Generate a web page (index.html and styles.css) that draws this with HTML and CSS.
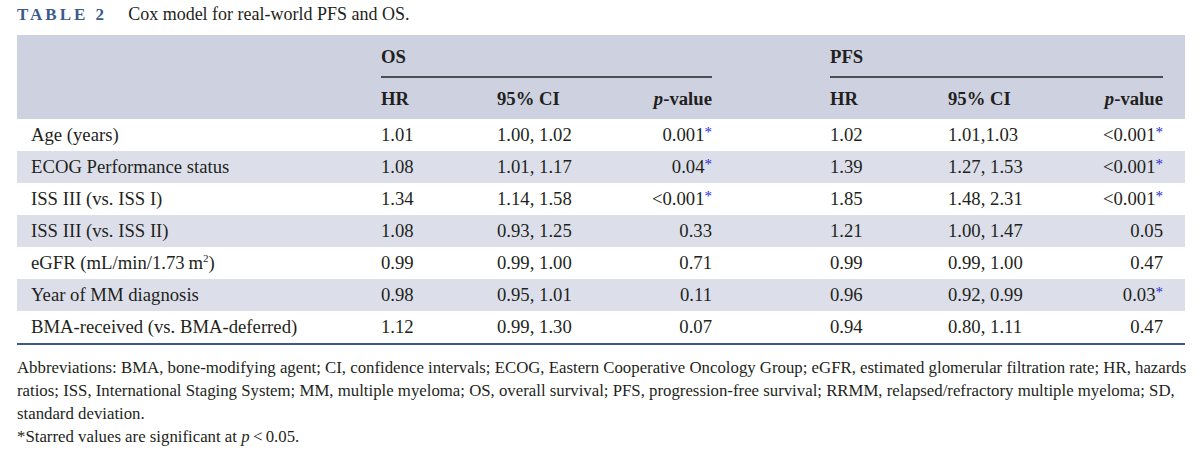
FILE: index.html
```html
<!DOCTYPE html>
<html>
<head>
<meta charset="utf-8">
<link rel="stylesheet" href="styles.css">
</head>
<body>
<div class="page">
  <div class="caption"><span class="label">TABLE 2</span><span class="title">Cox model for real-world PFS and OS.</span></div>
  <table class="cox">
    <colgroup>
      <col class="c-label"><col class="c-hr"><col class="c-ci"><col class="c-p">
      <col class="c-gap"><col class="c-hr2"><col class="c-ci"><col class="c-p"><col class="c-end">
    </colgroup>
    <thead>
      <tr class="group">
        <th></th>
        <th colspan="3" class="grp">OS</th>
        <th></th>
        <th colspan="3" class="grp">PFS</th>
        <th></th>
      </tr>
      <tr class="sub">
        <th></th>
        <th>HR</th><th>95% CI</th><th class="r"><i>p</i>-value</th>
        <th></th>
        <th>HR</th><th>95% CI</th><th class="r"><i>p</i>-value</th>
        <th></th>
      </tr>
    </thead>
    <tbody>
      <tr><td class="lab">Age (years)</td><td>1.01</td><td>1.00, 1.02</td><td class="r">0.001<sup>*</sup></td><td></td><td>1.02</td><td>1.01,1.03</td><td class="r">&lt;0.001<sup>*</sup></td><td></td></tr>
      <tr class="alt"><td class="lab">ECOG Performance status</td><td>1.08</td><td>1.01, 1.17</td><td class="r">0.04<sup>*</sup></td><td></td><td>1.39</td><td>1.27, 1.53</td><td class="r">&lt;0.001<sup>*</sup></td><td></td></tr>
      <tr><td class="lab">ISS III (vs. ISS I)</td><td>1.34</td><td>1.14, 1.58</td><td class="r">&lt;0.001<sup>*</sup></td><td></td><td>1.85</td><td>1.48, 2.31</td><td class="r">&lt;0.001<sup>*</sup></td><td></td></tr>
      <tr class="alt"><td class="lab">ISS III (vs. ISS II)</td><td>1.08</td><td>0.93, 1.25</td><td class="r">0.33</td><td></td><td>1.21</td><td>1.00, 1.47</td><td class="r">0.05</td><td></td></tr>
      <tr><td class="lab">eGFR (mL/min/1.73&#8201;m<sup class="sq">2</sup>)</td><td>0.99</td><td>0.99, 1.00</td><td class="r">0.71</td><td></td><td>0.99</td><td>0.99, 1.00</td><td class="r">0.47</td><td></td></tr>
      <tr class="alt"><td class="lab">Year of MM diagnosis</td><td>0.98</td><td>0.95, 1.01</td><td class="r">0.11</td><td></td><td>0.96</td><td>0.92, 0.99</td><td class="r">0.03<sup>*</sup></td><td></td></tr>
      <tr><td class="lab">BMA-received (vs. BMA-deferred)</td><td>1.12</td><td>0.99, 1.30</td><td class="r">0.07</td><td></td><td>0.94</td><td>0.80, 1.11</td><td class="r">0.47</td><td></td></tr>
    </tbody>
  </table>
  <div class="notes">
    <p>Abbreviations: BMA, bone-modifying agent; CI, confidence intervals; ECOG, Eastern Cooperative Oncology Group; eGFR, estimated glomerular filtration rate; HR, hazards ratios; ISS, International Staging System; MM, multiple myeloma; OS, overall survival; PFS, progression-free survival; RRMM, relapsed/refractory multiple myeloma; SD, standard deviation.</p>
    <p>*Starred values are significant at <i>p</i>&#8201;&lt;&#8201;0.05.</p>
  </div>
</div>
</body>
</html>
```

FILE: styles.css
```css
html, body {
  margin: 0;
  padding: 0;
  background: #ffffff;
}

.page {
  padding: 4px 0 0 17px;
  width: 1168px;
  font-family: "Liberation Serif", "Times New Roman", serif;
  color: #231f20;
}

.caption {
  display: flex;
  align-items: baseline;
  gap: 21px;
  height: 31px;
  line-height: 20px;
}

.caption .label {
  font-weight: bold;
  font-size: 17px;
  letter-spacing: 3px;
  color: #3d5a8c;
}

.caption .title {
  font-size: 18px;
}

.cox {
  width: 1168px;
  border-collapse: collapse;
  table-layout: fixed;
  font-size: 18.7px;
  border-bottom: 2px solid #3d5a8c;
}

.c-label { width: 364px; }
.c-hr { width: 116px; }
.c-ci { width: 115px; }
.c-p { width: 100px; }
.c-gap { width: 118px; }
.c-hr2 { width: 118px; }
.c-end { width: 22px; }

.cox th, .cox td {
  padding: 0;
  text-align: left;
  white-space: nowrap;
}

.cox thead {
  background: #ced2e0;
}

.cox th {
  font-weight: bold;
}

.cox tr.group th {
  height: 42px;
  vertical-align: bottom;
  padding-bottom: 9px;
  box-sizing: border-box;
  line-height: 20px;
}

.cox th.grp {
  border-bottom: 2px solid #4a4d56;
}

.cox tr.sub th {
  height: 41px;
  line-height: 20px;
  vertical-align: middle;
}

.cox td {
  height: 32px;
  line-height: 20px;
}

.cox td.lab {
  padding-left: 14px;
}

.cox .r {
  text-align: right;
}

.cox tr.alt td {
  background: #dcdfea;
}

.cox sup {
  color: #2a2ad4;
  font-size: 15px;
  vertical-align: 4px;
  line-height: 0;
}

.cox sup.sq {
  color: inherit;
  font-size: 11px;
  vertical-align: 7px;
}

.notes {
  padding-top: 11px;
  font-size: 16.8px;
  line-height: 23px;
  width: 1180px;
}

.notes p {
  margin: 0;
}
```
